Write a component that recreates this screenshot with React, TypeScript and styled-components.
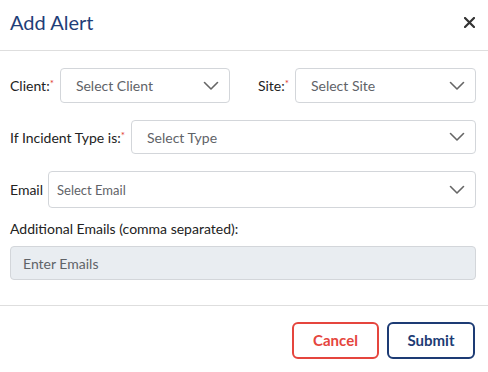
import React from 'react';
import styled, { createGlobalStyle } from 'styled-components';

const GlobalStyle = createGlobalStyle`
  body {
    margin: 0;
    background: #ffffff;
    font-family: Lato, 'Liberation Sans', sans-serif;
    color: #222;
  }
`;

const Modal = styled.div`
  width: 488px;
  height: 372px;
  background: #fff;
  display: flex;
  flex-direction: column;
`;

const Header = styled.div`
  height: 51px;
  display: flex;
  align-items: center;
  justify-content: space-between;
  padding: 0 12px 0 10px;
  border-bottom: 1px solid #dedede;
  box-sizing: border-box;
`;

const Title = styled.h2`
  margin: 0;
  font-size: 20px;
  font-weight: 400;
  color: #1f3e78;
  padding-bottom: 6px;
`;

const CloseButton = styled.button`
  background: none;
  border: none;
  padding: 0;
  width: 14px;
  height: 14px;
  margin-bottom: 6px;
  display: flex;
  align-items: center;
  justify-content: center;
  cursor: pointer;
`;

const Body = styled.div`
  padding: 17px 12px 0 10px;
  display: flex;
  flex-direction: column;
  flex: 1;
  border-bottom: 1px solid #dedede;
`;

const Row = styled.div<{ mb?: number }>`
  display: flex;
  align-items: center;
  margin-bottom: ${p => p.mb ?? 17}px;
`;

const Label = styled.label<{ gap?: number; ml?: number }>`
  font-size: 14px;
  color: #222;
  margin-right: ${p => p.gap ?? 6}px;
  margin-left: ${p => p.ml ?? 0}px;
  white-space: nowrap;
`;

const Star = styled.span`
  color: #e03a33;
  font-size: 10px;
  vertical-align: top;
  margin-left: 0;
  position: relative;
  top: 0;
`;

const SelectBox = styled.div<{ w?: number; h?: number; small?: boolean; pad?: number }>`
  ${p => (p.w ? `width: ${p.w}px; flex: none;` : 'flex: 1;')}
  height: ${p => p.h ?? 35}px;
  box-sizing: border-box;
  border: 1px solid #d3d6da;
  border-radius: 4px;
  display: flex;
  align-items: center;
  justify-content: space-between;
  padding: 0 10px 0 ${p => p.pad ?? 15}px;
  font-size: ${p => (p.small ? 13 : 14)}px;
  color: #5f6368;
  cursor: pointer;
`;

const Chevron = () => (
  <svg width="16" height="10" viewBox="0 0 16 10" fill="none">
    <path d="M1.5 1.5 L8 8 L14.5 1.5" stroke="#666" strokeWidth="1.6" strokeLinecap="round" strokeLinejoin="round" />
  </svg>
);

const FieldLabel = styled.div`
  font-size: 14px;
  color: #222;
  margin-bottom: 9px;
`;

const EmailsInput = styled.input`
  width: 100%;
  height: 34px;
  box-sizing: border-box;
  background: #e9edf1;
  border: 1px solid #d3d6da;
  border-radius: 4px;
  padding: 0 12px;
  font-family: inherit;
  font-size: 14px;
  color: #333;

  &::placeholder {
    color: #5f6368;
  }
`;

const Footer = styled.div`
  height: 66px;
  display: flex;
  align-items: center;
  justify-content: flex-end;
  gap: 8px;
  padding: 2px 13px 0 0;
  box-sizing: border-box;
`;

const Button = styled.button<{ tone: 'red' | 'navy' }>`
  height: 37px;
  width: ${p => (p.tone === 'red' ? 87 : 88)}px;
  box-sizing: border-box;
  background: #fff;
  border: 2px solid ${p => (p.tone === 'red' ? '#e5453d' : '#1d3b74')};
  color: ${p => (p.tone === 'red' ? '#e5453d' : '#1d3b74')};
  border-radius: 6px;
  font-family: inherit;
  font-size: 15px;
  font-weight: 700;
  cursor: pointer;
`;

export default function App() {
  return (
    <>
      <GlobalStyle />
      <Modal>
        <Header>
          <Title>Add Alert</Title>
          <CloseButton aria-label="Close">
            <svg width="11" height="11" viewBox="0 0 11 11">
              <path d="M1 1 L10 10 M10 1 L1 10" stroke="#333" strokeWidth="2.2" strokeLinecap="round" />
            </svg>
          </CloseButton>
        </Header>
        <Body>
          <Row>
            <Label>Client:<Star>*</Star></Label>
            <SelectBox w={170}>
              Select Client
              <Chevron />
            </SelectBox>
            <Label ml={28}>Site:<Star>*</Star></Label>
            <SelectBox>
              Select Site
              <Chevron />
            </SelectBox>
          </Row>
          <Row>
            <Label>If Incident Type is:<Star>*</Star></Label>
            <SelectBox h={34}>
              Select Type
              <Chevron />
            </SelectBox>
          </Row>
          <Row mb={12}>
            <Label gap={5}>Email</Label>
            <SelectBox h={37} small pad={8}>
              Select Email
              <Chevron />
            </SelectBox>
          </Row>
          <FieldLabel>Additional Emails (comma separated):</FieldLabel>
          <EmailsInput placeholder="Enter Emails" />
        </Body>
        <Footer>
          <Button tone="red">Cancel</Button>
          <Button tone="navy">Submit</Button>
        </Footer>
      </Modal>
    </>
  );
}
